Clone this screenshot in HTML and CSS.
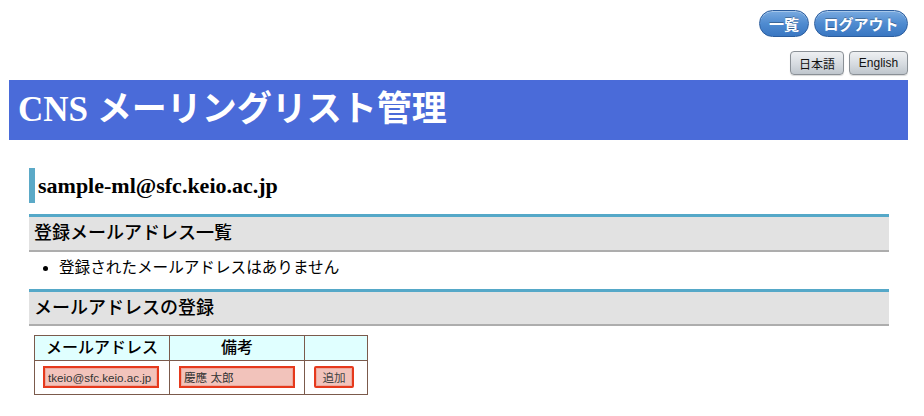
FILE: index.html
```html
<!DOCTYPE html>
<html lang="ja">
<head>
<meta charset="utf-8">
<title>CNS メーリングリスト管理</title>
<link rel="stylesheet" href="styles.css">
</head>
<body>
<div class="topnav">
  <a class="pill pill-list" href="#">一覧</a>
  <a class="pill pill-logout" href="#">ログアウト</a>
</div>
<div class="langnav">
  <button class="lang lang-ja" type="button">日本語</button>
  <button class="lang lang-en" type="button">English</button>
</div>
<h1 class="banner">CNS メーリングリスト管理</h1>
<div class="content">
  <h2 class="ml-title">sample-ml@sfc.keio.ac.jp</h2>
  <h3 class="sec">登録メールアドレス一覧</h3>
  <ul class="addr-list">
    <li>登録されたメールアドレスはありません</li>
  </ul>
  <h3 class="sec sec-form">メールアドレスの登録</h3>
  <table class="reg">
    <colgroup>
      <col class="c-mail">
      <col class="c-note">
      <col class="c-btn">
    </colgroup>
    <tr>
      <th>メールアドレス</th>
      <th>備考</th>
      <th></th>
    </tr>
    <tr>
      <td class="cell-mail"><input class="field field-mail" type="text" value="tkeio@sfc.keio.ac.jp"></td>
      <td class="cell-note"><input class="field field-note" type="text" value="慶應 太郎"></td>
      <td class="cell-btn"><button class="field add-btn" type="button">追加</button></td>
    </tr>
  </table>
</div>
</body>
</html>
```

FILE: styles.css
```css
body {
  margin: 8px;
  font-family: "Liberation Serif", "Noto Sans CJK JP", serif;
  color: #000;
  background: #fff;
}

.topnav {
  display: flex;
  justify-content: flex-end;
  gap: 5px;
  margin-top: 2px;
  padding-right: 8px;
}

.pill {
  display: flex;
  align-items: center;
  justify-content: center;
  box-sizing: border-box;
  height: 27px;
  border-radius: 14px;
  border: 1px solid #2b5d9e;
  background: linear-gradient(#79aae0, #4f8bd0 50%, #3a77c2);
  color: #fff;
  font-family: "Noto Sans CJK JP", sans-serif;
  font-weight: bold;
  font-size: 15px;
  text-decoration: none;
  text-shadow: 0 -1px 0 rgba(0, 0, 0, 0.3);
  box-shadow: inset 0 1px 0 rgba(255, 255, 255, 0.35);
}

.pill-list { width: 50px; }
.pill-logout { width: 94px; }

.langnav {
  display: flex;
  justify-content: flex-end;
  gap: 5px;
  margin-top: 14px;
  padding-right: 8px;
}

.lang {
  box-sizing: border-box;
  height: 24px;
  margin: 0;
  padding: 0;
  border: 1px solid #8a9096;
  border-radius: 4px;
  background: linear-gradient(#eef0f2, #d6dbe0 55%, #bfc6cd);
  color: #111;
  font-family: "Noto Sans CJK JP", "Liberation Sans", sans-serif;
  font-size: 12px;
  box-shadow: 0 1px 1px rgba(0, 0, 0, 0.15);
}

.lang-ja { width: 54px; }
.lang-en { width: 59px; font-family: "Liberation Sans", sans-serif; }

.banner {
  box-sizing: border-box;
  width: 899px;
  height: 60px;
  margin: 5px 0 0 1px;
  padding: 0 0 0 9px;
  background: #4a6bd9;
  color: #fff;
  font-size: 35px;
  font-weight: bold;
  line-height: 60px;
  white-space: nowrap;
}

.content {
  width: 860px;
  margin-left: 21px;
}

.ml-title {
  margin: 28px 0 0;
  padding-left: 3px;
  border-left: 6px solid #5ba9c7;
  height: 35px;
  font-size: 22px;
  font-weight: bold;
  line-height: 35px;
}

.sec {
  margin: 11px 0 0;
  padding-left: 5px;
  height: 33px;
  border-top: 3px solid #55a8c8;
  border-bottom: 2px solid #adadad;
  background: #e2e2e2;
  font-size: 18px;
  font-weight: 500;
  line-height: 33px;
}

.sec-form {
  margin-top: 9px;
  height: 32px;
  line-height: 32px;
}

.addr-list {
  margin: 4px 0 0;
  padding-left: 30px;
  font-size: 15.6px;
  line-height: 24px;
}

.reg {
  margin: 9px 0 0 5px;
  border-collapse: collapse;
  table-layout: fixed;
  width: 333px;
  border: 1px solid #7b5a4c;
}

.c-mail { width: 135px; }
.c-note { width: 135px; }
.c-btn { width: 63px; }

.reg th {
  height: 24px;
  padding: 0;
  border: 1px solid #7b5a4c;
  background: #e0ffff;
  font-size: 16px;
  font-weight: 500;
  line-height: 24px;
  text-align: center;
}

.reg td {
  padding: 5px 0 6px 8px;
  border: 1px solid #7b5a4c;
  line-height: 0;
}

.reg .cell-note { padding-left: 9px; }
.reg .cell-btn { padding-left: 9px; }

.field {
  box-sizing: border-box;
  height: 22px;
  margin: 0;
  border: 2px solid #e6391c;
  background: #f2c3bb;
  box-shadow: inset 0 0 0 1px #eeaa9e;
  color: #333;
  font-family: "Liberation Sans", "Noto Sans CJK JP", sans-serif;
  font-size: 11.6px;
  outline: none;
}

.field-mail,
.field-note {
  width: 116px;
  padding: 0 3px;
}

.add-btn {
  width: 40px;
  padding: 0;
  border-radius: 2px;
  font-family: "Noto Sans CJK JP", sans-serif;
  color: #444;
}
```
